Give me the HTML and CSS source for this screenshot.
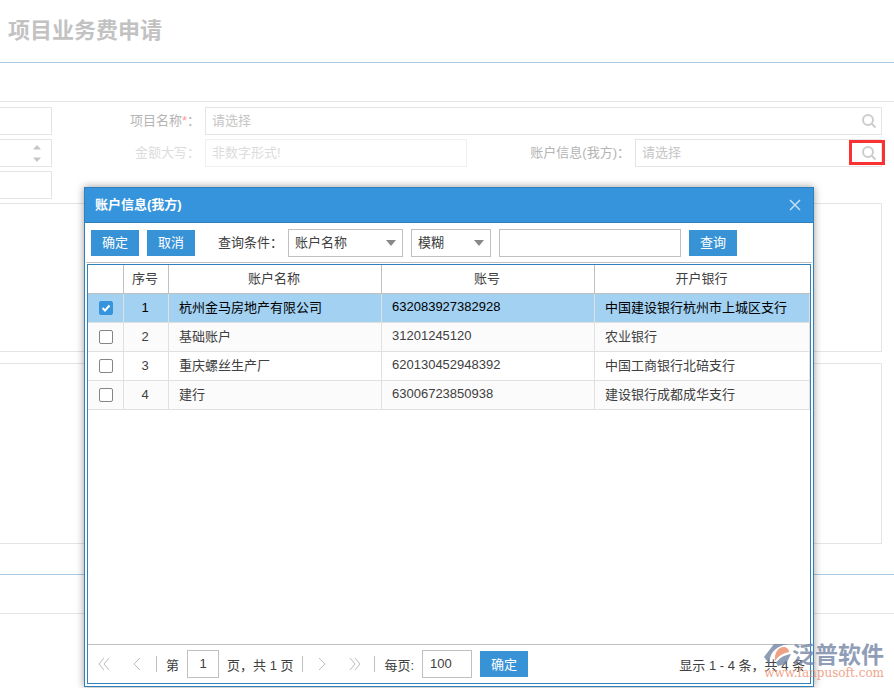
FILE: index.html
```html
<!DOCTYPE html>
<html lang="zh-CN">
<head>
  <meta charset="UTF-8" />
  <meta name="viewport" content="width=device-width, initial-scale=1.0"/>
  <title>项目业务费申请</title>
  <link rel="stylesheet" href="styles.css">
</head>
<body>

  <!-- FORM PAGE -->
  <div class="page">
    <header class="page-header">
      <h1>项目业务费申请</h1>
    </header>
    <div class="tool-strip"></div>

    <form class="form">
      <div class="form-side">
        <input class="field" type="text" aria-label="编号" />
        <div class="spinner field">
          <input type="text" aria-label="金额" />
          <div class="spin-arrows">
            <svg width="8" height="5" viewBox="0 0 8 5"><path d="M4 0L8 4.5H0z"/></svg>
            <svg width="8" height="5" viewBox="0 0 8 5"><path d="M4 5L0 .5H8z"/></svg>
          </div>
        </div>
        <input class="field" type="text" aria-label="日期" />
      </div>

      <div class="form-main">
        <div class="form-row">
          <label for="project">项目名称<span class="required">*</span>：</label>
          <div class="field picker">
            <input id="project" type="text" placeholder="请选择" />
            <button type="button" class="search-btn" aria-label="选择项目">
              <svg width="16" height="16" viewBox="0 0 16 16"><circle cx="7" cy="7" r="5"/><path d="M10.500 10.500L14.500 14.500"/></svg>
            </button>
          </div>
        </div>
        <div class="form-row">
          <label class="muted" for="amount">金额大写：</label>
          <input id="amount" class="field amount muted" type="text" placeholder="非数字形式!" />
          <label class="account-label" for="account">账户信息(我方)：</label>
          <div class="field picker">
            <input id="account" type="text" placeholder="请选择" />
            <button type="button" class="search-btn marked" aria-label="选择账户">
              <svg width="16" height="16" viewBox="0 0 16 16"><circle cx="7" cy="7" r="5"/><path d="M10.500 10.500L14.500 14.500"/></svg>
            </button>
          </div>
        </div>
      </div>
    </form>

    <div class="panel"></div>
    <div class="panel panel-tall"></div>
    <div class="tool-strip bottom-strip"></div>
  </div>

  <!-- DIALOG -->
  <div class="dialog" role="dialog" aria-labelledby="dialogTitle">
    <div class="dialog-header">
      <h2 id="dialogTitle">账户信息(我方)</h2>
      <button type="button" class="close-btn" aria-label="关闭">
        <svg width="12" height="12" viewBox="0 0 12 12"><path d="M1 1L11 11M11 1L1 11"/></svg>
      </button>
    </div>

    <div class="toolbar">
      <button type="button" class="btn">确定</button>
      <button type="button" class="btn">取消</button>
      <label for="condition">查询条件：</label>
      <select id="condition" class="select condition"><option>账户名称</option></select>
      <select class="select match" aria-label="匹配方式"><option>模糊</option></select>
      <input class="keyword" type="text" aria-label="关键字" />
      <button type="button" class="btn">查询</button>
    </div>

    <div class="grid">
      <div class="grid-body">
        <table>
          <colgroup>
            <col class="col-check"><col class="col-no"><col class="col-data"><col class="col-data"><col>
          </colgroup>
          <thead>
            <tr><th></th><th>序号</th><th>账户名称</th><th>账号</th><th>开户银行</th></tr>
          </thead>
          <tbody>
            <tr class="selected">
              <td><input type="checkbox" aria-label="选择第1行" checked /></td>
              <td>1</td><td>杭州金马房地产有限公司</td><td>632083927382928</td><td>中国建设银行杭州市上城区支行</td>
            </tr>
            <tr>
              <td><input type="checkbox" aria-label="选择第2行" /></td>
              <td>2</td><td>基础账户</td><td>31201245120</td><td>农业银行</td>
            </tr>
            <tr>
              <td><input type="checkbox" aria-label="选择第3行" /></td>
              <td>3</td><td>重庆螺丝生产厂</td><td>620130452948392</td><td>中国工商银行北碚支行</td>
            </tr>
            <tr>
              <td><input type="checkbox" aria-label="选择第4行" /></td>
              <td>4</td><td>建行</td><td>63006723850938</td><td>建设银行成都成华支行</td>
            </tr>
          </tbody>
        </table>
      </div>

      <div class="pager">
        <button type="button" class="page-btn" aria-label="首页">
          <svg width="12" height="14" viewBox="0 0 12 14"><path d="M6 1L1 7L6 13M11 1L6 7L11 13"/></svg>
        </button>
        <button type="button" class="page-btn" aria-label="上一页">
          <svg width="12" height="14" viewBox="0 0 12 14"><path d="M9 1L3 7L9 13"/></svg>
        </button>
        <span class="divider"></span>
        <label for="pageNo">第</label>
        <input id="pageNo" class="page-no" type="text" value="1" />
        <span>页，共 1 页</span>
        <span class="divider"></span>
        <button type="button" class="page-btn" aria-label="下一页">
          <svg width="12" height="14" viewBox="0 0 12 14"><path d="M3 1L9 7L3 13"/></svg>
        </button>
        <button type="button" class="page-btn" aria-label="末页">
          <svg width="12" height="14" viewBox="0 0 12 14"><path d="M1 1L6 7L1 13M6 1L11 7L6 13"/></svg>
        </button>
        <span class="divider"></span>
        <label for="pageSize">每页:</label>
        <input id="pageSize" class="page-size" type="text" value="100" />
        <button type="button" class="btn">确定</button>
        <span class="total">显示 1 - 4 条，共 4 条</span>
      </div>
    </div>
  </div>

  <!-- WATERMARK -->
  <div class="watermark">
    <div class="brand">
      <svg width="28" height="24" viewBox="0 0 28 24">
        <path class="mark-blue" d="M26 1H10L0 14L6 22C4 11 12 2 26 1z"/>
        <path class="mark-orange" d="M11 18C10 9 15 3 21 4C24 5 25 7 25 9C20 10 15 12 11 18z"/>
        <path class="mark-blue" d="M12 20C15 15 20 12 27 11L22 21L14 23z"/>
      </svg>
      <span>泛普软件</span>
    </div>
    <div class="site">www.fanpusoft.com</div>
  </div>

</body>
</html>
```

FILE: styles.css
```css
* {
  margin: 0;
  padding: 0;
  box-sizing: border-box;
}

body {
  min-height: 100vh;
  overflow: hidden;
  background: #fff;
  color: #404040;
  font-family: "Liberation Sans", "Noto Sans CJK SC", sans-serif;
  font-size: 13px;
}

input, select, button {
  font: inherit;
  color: inherit;
}

button {
  border: none;
  background: none;
  cursor: pointer;
}

/* Form page */
.page-header {
  height: 63px;
  padding: 15px 8px;
  border-bottom: 1px solid #a9cce6;
}

.page-header h1 {
  color: #c2c2c2;
  font-size: 22px;
  line-height: 32px;
}

.tool-strip {
  height: 39px;
  border-bottom: 1px solid #e4e4e4;
}

.form {
  display: flex;
  padding: 5px 12px 4px 0;
  color: #b4b4b4;
}

.form-side {
  display: flex;
  flex-direction: column;
  gap: 4px;
  width: 52px;
}

.field {
  height: 28px;
  border: 1px solid #e4e4e4;
  background: #fff;
}

.form-side .field {
  width: 100%;
  border-left: none;
}

.spinner {
  display: flex;
}

.spinner input {
  width: 33px;
  border: none;
}

.spin-arrows {
  display: flex;
  flex-direction: column;
  justify-content: center;
  gap: 7px;
  fill: #c6c6c6;
}

.spin-arrows svg {
  display: block;
}

.form-main {
  display: flex;
  flex: 1;
  flex-direction: column;
  gap: 4px;
}

.form-row {
  display: flex;
  align-items: center;
}

.form-row label {
  width: 153px;
  padding-right: 5px;
  line-height: 26px;
  text-align: right;
}

.form-row .account-label {
  width: 168px;
}

.required {
  color: #f99;
}

.form-row .muted {
  color: #dcdcdc;
}

.picker {
  display: flex;
  flex: 1;
}

.picker input {
  flex: 1;
  min-width: 0;
  padding: 0 0 2px 6px;
  border: none;
  outline: none;
}

.form-row .amount {
  width: 262px;
  padding: 0 0 2px 6px;
  border-color: #f0f0f0;
}

input::placeholder {
  color: #c6c6c6;
}

.muted::placeholder {
  color: #dcdcdc;
}

.search-btn {
  display: flex;
  align-items: center;
  justify-content: center;
  width: 24px;
}

.search-btn svg {
  fill: none;
  stroke: #cdcdcd;
  stroke-width: 2;
}

.marked {
  width: 36px;
  height: 25px;
  margin-right: -4px;
  padding-left: 4px;
  border: 3px solid #fb3232;
}

.panel {
  height: 149px;
  margin-right: 12px;
  border: 1px solid #e4e4e4;
  border-left: none;
}

.panel-tall {
  height: 181px;
  margin-top: 11px;
}

.bottom-strip {
  height: 40px;
  margin-top: 30px;
  border-top: 1px solid #a9cce6;
}

/* Dialog */
.dialog {
  position: absolute;
  top: 187px;
  right: 80px;
  bottom: 1px;
  left: 84px;
  display: flex;
  flex-direction: column;
  border: 1px solid #3081bb;
  background: #fff;
  box-shadow: 0 0 8px rgba(0, 0, 0, 0.4);
}

.dialog-header {
  display: flex;
  align-items: center;
  justify-content: space-between;
  height: 35px;
  padding: 0 12px 0 10px;
  border-bottom: 1px solid #3081bb;
  background: #3594db;
  color: #fff;
}

.dialog-header h2 {
  padding-bottom: 3px;
  font-size: 13px;
}

.close-btn {
  display: flex;
}

.close-btn svg {
  fill: none;
  stroke: #c5e0f5;
  stroke-width: 1.5;
}

.toolbar {
  display: flex;
  align-items: center;
  gap: 8px;
  height: 40px;
  margin: 0 1px;
  padding: 0 5px;
  border-bottom: 1px solid #c0c0c0;
}

.toolbar label {
  width: 77px;
  padding: 0 0 2px 15px;
  white-space: nowrap;
}

.btn {
  width: 48px;
  height: 26px;
  padding-bottom: 2px;
  background: #3892d6;
  color: #fff;
}

.select, .keyword {
  height: 28px;
  border: 1px solid #c0c0c0;
  background: #fff;
}

.select {
  padding: 0 6px;
  appearance: none;
  background: #fff url("data:image/svg+xml,%3Csvg xmlns='http://www.w3.org/2000/svg' width='10' height='6'%3E%3Cpath d='M0 0H10L5 6z' fill='%23888'/%3E%3C/svg%3E") no-repeat right 6px center;
}

.condition {
  width: 115px;
}

.match {
  width: 80px;
}

.keyword {
  width: 182px;
}

/* Grid */
.grid {
  display: flex;
  flex: 1;
  flex-direction: column;
  margin: 1px 2px 2px;
  border: 1px solid #3081bb;
}

.grid-body {
  flex: 1;
}

table {
  width: 100%;
  border-collapse: separate;
  border-spacing: 0;
  table-layout: fixed;
}

.col-check {
  width: 36px;
}

.col-no {
  width: 45px;
}

.col-data {
  width: 213px;
}

th, td {
  height: 29px;
  padding-bottom: 3px;
  border-right: 1px solid #e0e0e0;
  border-bottom: 1px solid #e0e0e0;
  white-space: nowrap;
}

th {
  padding-right: 2px;
  border-color: #c0c0c0;
  font-weight: normal;
}

th:last-child {
  border-right: none;
}

td {
  padding-left: 10px;
}

td:nth-child(-n+2) {
  padding: 0 2px 2px 0;
  text-align: center;
}

td:first-child:first-child {
  padding: 0;
}

tbody tr:nth-child(even) {
  background: #fbfbfb;
}

tbody .selected {
  background: #a2d1f2;
  color: #000;
}

td input {
  display: block;
  width: 14px;
  height: 14px;
  margin: 0 auto;
  appearance: none;
  border: 1px solid #858585;
  border-radius: 2px;
  background: #fff;
}

td input:checked {
  border-color: #3594db;
  background: #3594db url("data:image/svg+xml,%3Csvg xmlns='http://www.w3.org/2000/svg' width='12' height='12'%3E%3Cpath d='M2.500 6L5 8.500L9.500 3.500' fill='none' stroke='%23fff' stroke-width='2'/%3E%3C/svg%3E") no-repeat center;
}

/* Pager */
.pager {
  display: flex;
  align-items: center;
  height: 39px;
  padding: 0 5px 0 6px;
  border-top: 1px solid #c0c0c0;
  white-space: nowrap;
}

.page-btn {
  display: flex;
  justify-content: center;
  width: 20px;
}

.page-btn + .page-btn {
  margin-left: 13px;
}

.page-btn svg {
  fill: none;
  stroke: #bcbcbc;
}

.divider {
  width: 1px;
  height: 16px;
  margin: 0 9px;
  background: #c0c0c0;
}

.page-no, .page-size {
  height: 28px;
  margin: 0 8px;
  padding-bottom: 1px;
  border: 1px solid #c0c0c0;
}

.page-no {
  width: 32px;
  text-align: center;
}

.page-size {
  width: 50px;
  padding-left: 7px;
}

.total {
  margin-left: auto;
}

/* Watermark */
.watermark {
  position: absolute;
  right: 10px;
  bottom: 9px;
  opacity: 0.8;
  pointer-events: none;
}

.brand {
  display: flex;
  justify-content: flex-end;
  color: #7485a5;
  font-size: 23px;
  font-weight: bold;
  line-height: 24px;
}

.mark-blue {
  fill: #7485a5;
}

.mark-orange {
  fill: #ea8a66;
}

.site {
  color: #eb9070;
  font-family: "DejaVu Serif", serif;
  font-size: 12px;
  line-height: 12px;
  text-align: right;
}
```
